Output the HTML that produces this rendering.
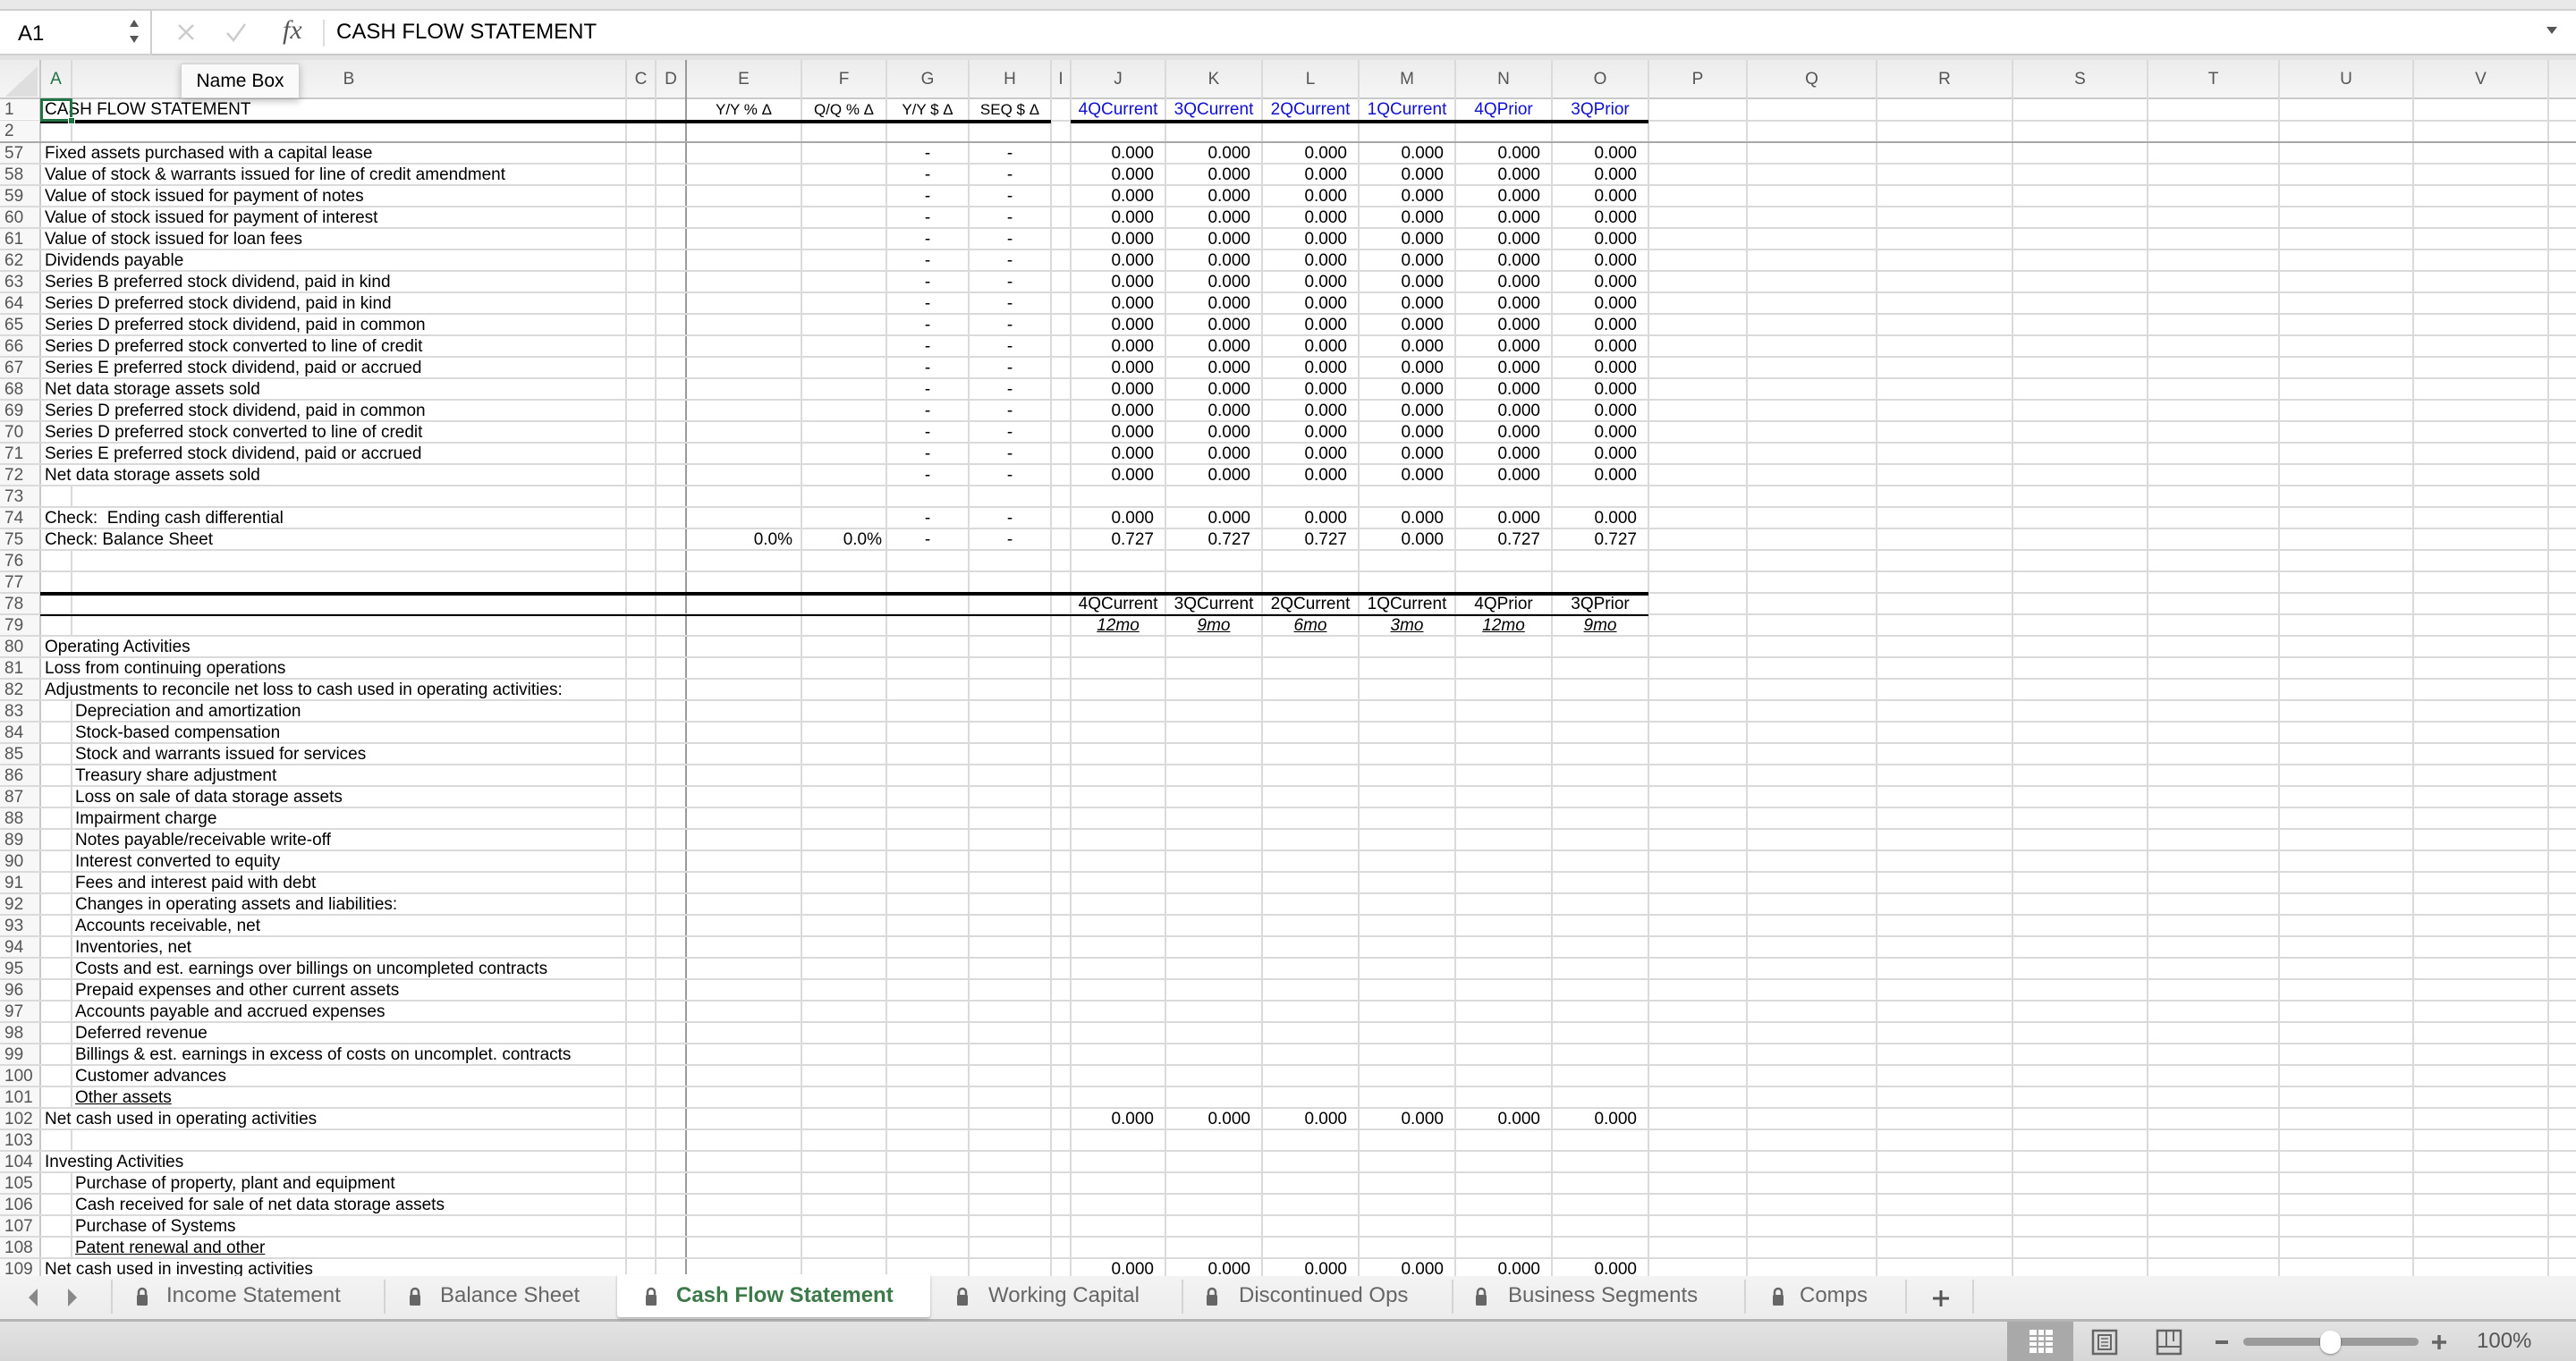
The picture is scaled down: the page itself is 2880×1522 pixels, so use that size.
<!DOCTYPE html>
<html><head><meta charset="utf-8">
<style>
*{margin:0;padding:0;box-sizing:border-box}
body{width:2880px;height:1522px;overflow:hidden;position:relative;background:#fff;font-family:"Liberation Sans",sans-serif;font-size:19px;color:#000}
.abs{position:absolute}
#top{left:0;top:0;width:2880px;height:10px;background:#e9e9e9}
#fbar{left:0;top:10px;width:2880px;height:52px;background:#fff;border-top:2px solid #d0d0d0;border-bottom:2px solid #c8c8c8}
#nbox{left:0;top:10px;width:170px;height:52px;border:2px solid #cfcfcf;border-left:none;background:#fff}
#hdr{left:0;top:62px;width:2880px;height:49px;background:linear-gradient(#ececec,#f5f5f5);border-top:5px solid #e2e2e2;border-bottom:2px solid #c9c9c9}
.ch{position:absolute;top:67px;height:44px;line-height:44px;text-align:center;color:#555;font-size:19px}
.vl{position:absolute;top:67px;width:2px;height:1360px;background:#dadada}
.rw{position:absolute;left:0;width:2880px;height:24px;line-height:23px}
.rw span{position:absolute;top:0;height:22px;white-space:nowrap}
.n{left:0;width:44px;padding-left:5px;color:#555;background:#f7f7f7}
.a{left:47px;padding-left:3px;background:#fff}
.b{left:81px;padding-left:3px;background:#fff}
.e{left:767px;width:129px;text-align:right;padding-right:10px}
.f{left:896px;width:95px;text-align:right;padding-right:5px}
.g{left:991px;width:92px;text-align:center}
.h{left:1083px;width:92px;text-align:center}
.j{left:1197px;width:106px;text-align:right;padding-right:13px}
.k{left:1303px;width:108px;text-align:right;padding-right:13px}
.l{left:1411px;width:108px;text-align:right;padding-right:13px}
.m{left:1519px;width:108px;text-align:right;padding-right:13px}
.o1{left:1627px;width:108px;text-align:right;padding-right:13px}
.o{left:1735px;width:108px;text-align:right;padding-right:13px}
.hc{text-align:center!important;padding-right:0!important}
.u{text-decoration:underline}
.blue{color:#1010d0}
#tabs{left:0;top:1427px;width:2880px;height:51px;background:linear-gradient(#f3f3f3,#ececec);border-bottom:3px solid #b5b5b5;z-index:5}
.tab{position:absolute;top:0;height:46px;line-height:44px;font-size:24px;color:#666;white-space:nowrap}
.sep{position:absolute;top:4px;width:2px;height:38px;background:#d4d4d4}
#status{left:0;top:1478px;width:2880px;height:44px;background:linear-gradient(#e3e3e3,#d6d6d6);z-index:5}
</style></head><body>
<div id="top" class="abs"></div>
<div id="fbar" class="abs"></div>
<div id="nbox" class="abs"></div>
<div class="abs" style="left:20px;top:20px;font-size:24px;line-height:36px">A1</div>
<svg class="abs" style="left:142px;top:18px" width="16" height="36"><path d="M3 12 L8 4 L13 12Z M3 22 L8 30 L13 22Z" fill="#555"/></svg>
<svg class="abs" style="left:196px;top:24px" width="160" height="24"><path d="M4 4 L20 20 M20 4 L4 20" stroke="#ccc" stroke-width="2.5"/><path d="M58 13 L65 21 L78 3" stroke="#ccc" stroke-width="2.5" fill="none"/></svg>
<div class="abs" style="left:316px;top:14px;font-family:'Liberation Serif',serif;font-style:italic;font-size:30px;color:#555;line-height:40px">fx</div>
<div class="abs" style="left:361px;top:22px;width:2px;height:30px;background:#ddd"></div>
<div class="abs" style="left:376px;top:18px;font-size:24px;line-height:36px">CASH FLOW STATEMENT</div>
<svg class="abs" style="left:2846px;top:28px" width="14" height="12"><path d="M1 2 L13 2 L7 10Z" fill="#555"/></svg>

<div id="hdr" class="abs"></div>
<svg class="abs" style="left:0;top:70px" width="45" height="40"><path d="M6 38 L42 38 L42 4Z" fill="#dedede"/></svg>
<div class="ch" style="left:45px;width:35px;color:#217346">A</div>
<div class="ch" style="left:80px;width:620px">B</div>
<div class="ch" style="left:700px;width:33px">C</div>
<div class="ch" style="left:733px;width:34px">D</div>
<div class="ch" style="left:767px;width:129px">E</div>
<div class="ch" style="left:896px;width:95px">F</div>
<div class="ch" style="left:991px;width:92px">G</div>
<div class="ch" style="left:1083px;width:92px">H</div>
<div class="ch" style="left:1175px;width:22px">I</div>
<div class="ch" style="left:1197px;width:106px">J</div>
<div class="ch" style="left:1303px;width:108px">K</div>
<div class="ch" style="left:1411px;width:108px">L</div>
<div class="ch" style="left:1519px;width:108px">M</div>
<div class="ch" style="left:1627px;width:108px">N</div>
<div class="ch" style="left:1735px;width:108px">O</div>
<div class="ch" style="left:1843px;width:110px">P</div>
<div class="ch" style="left:1953px;width:145px">Q</div>
<div class="ch" style="left:2098px;width:152px">R</div>
<div class="ch" style="left:2250px;width:151px">S</div>
<div class="ch" style="left:2401px;width:147px">T</div>
<div class="ch" style="left:2548px;width:150px">U</div>
<div class="ch" style="left:2698px;width:151px">V</div>

<!-- vertical grid -->
<div class="vl" style="left:44px;background:#c8c8c8"></div>
<div class="vl" style="left:79px"></div>
<div class="vl" style="left:699px"></div>
<div class="vl" style="left:732px"></div>
<div class="vl" style="left:766px;background:#9a9a9a"></div>
<div class="vl" style="left:895px"></div>
<div class="vl" style="left:990px"></div>
<div class="vl" style="left:1082px"></div>
<div class="vl" style="left:1174px"></div>
<div class="vl" style="left:1196px"></div>
<div class="vl" style="left:1302px"></div>
<div class="vl" style="left:1410px"></div>
<div class="vl" style="left:1518px"></div>
<div class="vl" style="left:1626px"></div>
<div class="vl" style="left:1734px"></div>
<div class="vl" style="left:1842px"></div>
<div class="vl" style="left:1952px"></div>
<div class="vl" style="left:2097px"></div>
<div class="vl" style="left:2249px"></div>
<div class="vl" style="left:2400px"></div>
<div class="vl" style="left:2547px"></div>
<div class="vl" style="left:2697px"></div>
<div class="vl" style="left:2848px"></div>

<!-- horizontal grid -->
<div class="abs" style="left:0;top:160px;width:2880px;height:1267px;background:repeating-linear-gradient(to bottom,rgba(255,255,255,0) 0,rgba(255,255,255,0) 22px,#dadada 22px,#dadada 24px)"></div>
<div class="abs" style="left:0;top:134px;width:2880px;height:2px;background:#dadada"></div>
<div class="abs" style="left:0;top:158px;width:2880px;height:2px;background:#a8a8a8"></div>

<!-- thick lines -->
<div class="abs" style="left:45px;top:134px;width:1130px;height:4px;background:#000"></div>
<div class="abs" style="left:1197px;top:134px;width:646px;height:4px;background:#000"></div>
<div class="abs" style="left:45px;top:662px;width:1798px;height:4px;background:#000"></div>
<div class="abs" style="left:45px;top:687px;width:1798px;height:2px;background:#000"></div>

<!-- rows -->
<div class="rw" style="top:111px"><span class="n">1</span><span class="a" style="background:none">CASH FLOW STATEMENT</span><span class="e hc" style="font-size:17px">Y/Y % Δ</span><span class="f hc" style="font-size:17px">Q/Q % Δ</span><span class="g" style="font-size:17px">Y/Y $ Δ</span><span class="h" style="font-size:17px">SEQ $ Δ</span><span class="j hc blue">4QCurrent</span><span class="k hc blue">3QCurrent</span><span class="l hc blue">2QCurrent</span><span class="m hc blue">1QCurrent</span><span class="o1 hc blue">4QPrior</span><span class="o hc blue">3QPrior</span></div>
<div class="rw" style="top:135px"><span class="n">2</span></div>
<div class="abs" style="left:45px;top:110px;width:36px;height:26px;border:3px solid #217346"></div>
<div class="abs" style="left:76px;top:131px;width:8px;height:8px;background:#217346;border:1px solid #fff"></div>

<div class="rw" style="top:160px"><span class="n">57</span><span class="a">Fixed assets purchased with a capital lease</span><span class="g">-</span><span class="h">-</span><span class="j">0.000</span><span class="k">0.000</span><span class="l">0.000</span><span class="m">0.000</span><span class="o1">0.000</span><span class="o">0.000</span></div>
<div class="rw" style="top:184px"><span class="n">58</span><span class="a">Value of stock &amp; warrants issued for line of credit amendment</span><span class="g">-</span><span class="h">-</span><span class="j">0.000</span><span class="k">0.000</span><span class="l">0.000</span><span class="m">0.000</span><span class="o1">0.000</span><span class="o">0.000</span></div>
<div class="rw" style="top:208px"><span class="n">59</span><span class="a">Value of stock issued for payment of notes</span><span class="g">-</span><span class="h">-</span><span class="j">0.000</span><span class="k">0.000</span><span class="l">0.000</span><span class="m">0.000</span><span class="o1">0.000</span><span class="o">0.000</span></div>
<div class="rw" style="top:232px"><span class="n">60</span><span class="a">Value of stock issued for payment of interest</span><span class="g">-</span><span class="h">-</span><span class="j">0.000</span><span class="k">0.000</span><span class="l">0.000</span><span class="m">0.000</span><span class="o1">0.000</span><span class="o">0.000</span></div>
<div class="rw" style="top:256px"><span class="n">61</span><span class="a">Value of stock issued for loan fees</span><span class="g">-</span><span class="h">-</span><span class="j">0.000</span><span class="k">0.000</span><span class="l">0.000</span><span class="m">0.000</span><span class="o1">0.000</span><span class="o">0.000</span></div>
<div class="rw" style="top:280px"><span class="n">62</span><span class="a">Dividends payable</span><span class="g">-</span><span class="h">-</span><span class="j">0.000</span><span class="k">0.000</span><span class="l">0.000</span><span class="m">0.000</span><span class="o1">0.000</span><span class="o">0.000</span></div>
<div class="rw" style="top:304px"><span class="n">63</span><span class="a">Series B preferred stock dividend, paid in kind</span><span class="g">-</span><span class="h">-</span><span class="j">0.000</span><span class="k">0.000</span><span class="l">0.000</span><span class="m">0.000</span><span class="o1">0.000</span><span class="o">0.000</span></div>
<div class="rw" style="top:328px"><span class="n">64</span><span class="a">Series D preferred stock dividend, paid in kind</span><span class="g">-</span><span class="h">-</span><span class="j">0.000</span><span class="k">0.000</span><span class="l">0.000</span><span class="m">0.000</span><span class="o1">0.000</span><span class="o">0.000</span></div>
<div class="rw" style="top:352px"><span class="n">65</span><span class="a">Series D preferred stock dividend, paid in common</span><span class="g">-</span><span class="h">-</span><span class="j">0.000</span><span class="k">0.000</span><span class="l">0.000</span><span class="m">0.000</span><span class="o1">0.000</span><span class="o">0.000</span></div>
<div class="rw" style="top:376px"><span class="n">66</span><span class="a">Series D preferred stock converted to line of credit</span><span class="g">-</span><span class="h">-</span><span class="j">0.000</span><span class="k">0.000</span><span class="l">0.000</span><span class="m">0.000</span><span class="o1">0.000</span><span class="o">0.000</span></div>
<div class="rw" style="top:400px"><span class="n">67</span><span class="a">Series E preferred stock dividend, paid or accrued</span><span class="g">-</span><span class="h">-</span><span class="j">0.000</span><span class="k">0.000</span><span class="l">0.000</span><span class="m">0.000</span><span class="o1">0.000</span><span class="o">0.000</span></div>
<div class="rw" style="top:424px"><span class="n">68</span><span class="a">Net data storage assets sold</span><span class="g">-</span><span class="h">-</span><span class="j">0.000</span><span class="k">0.000</span><span class="l">0.000</span><span class="m">0.000</span><span class="o1">0.000</span><span class="o">0.000</span></div>
<div class="rw" style="top:448px"><span class="n">69</span><span class="a">Series D preferred stock dividend, paid in common</span><span class="g">-</span><span class="h">-</span><span class="j">0.000</span><span class="k">0.000</span><span class="l">0.000</span><span class="m">0.000</span><span class="o1">0.000</span><span class="o">0.000</span></div>
<div class="rw" style="top:472px"><span class="n">70</span><span class="a">Series D preferred stock converted to line of credit</span><span class="g">-</span><span class="h">-</span><span class="j">0.000</span><span class="k">0.000</span><span class="l">0.000</span><span class="m">0.000</span><span class="o1">0.000</span><span class="o">0.000</span></div>
<div class="rw" style="top:496px"><span class="n">71</span><span class="a">Series E preferred stock dividend, paid or accrued</span><span class="g">-</span><span class="h">-</span><span class="j">0.000</span><span class="k">0.000</span><span class="l">0.000</span><span class="m">0.000</span><span class="o1">0.000</span><span class="o">0.000</span></div>
<div class="rw" style="top:520px"><span class="n">72</span><span class="a">Net data storage assets sold</span><span class="g">-</span><span class="h">-</span><span class="j">0.000</span><span class="k">0.000</span><span class="l">0.000</span><span class="m">0.000</span><span class="o1">0.000</span><span class="o">0.000</span></div>
<div class="rw" style="top:544px"><span class="n">73</span></div>
<div class="rw" style="top:568px"><span class="n">74</span><span class="a">Check:&nbsp; Ending cash differential</span><span class="g">-</span><span class="h">-</span><span class="j">0.000</span><span class="k">0.000</span><span class="l">0.000</span><span class="m">0.000</span><span class="o1">0.000</span><span class="o">0.000</span></div>
<div class="rw" style="top:592px"><span class="n">75</span><span class="a">Check: Balance Sheet</span><span class="e">0.0%</span><span class="f">0.0%</span><span class="g">-</span><span class="h">-</span><span class="j">0.727</span><span class="k">0.727</span><span class="l">0.727</span><span class="m">0.000</span><span class="o1">0.727</span><span class="o">0.727</span></div>
<div class="rw" style="top:616px"><span class="n">76</span></div>
<div class="rw" style="top:640px"><span class="n">77</span></div>
<div class="rw" style="top:664px"><span class="n">78</span><span class="j hc">4QCurrent</span><span class="k hc">3QCurrent</span><span class="l hc">2QCurrent</span><span class="m hc">1QCurrent</span><span class="o1 hc">4QPrior</span><span class="o hc">3QPrior</span></div>
<div class="rw" style="top:688px;font-style:italic"><span class="n" style="font-style:normal">79</span><span class="j hc u">12mo</span><span class="k hc u">9mo</span><span class="l hc u">6mo</span><span class="m hc u">3mo</span><span class="o1 hc u">12mo</span><span class="o hc u">9mo</span></div>
<div class="rw" style="top:712px"><span class="n">80</span><span class="a">Operating Activities</span></div>
<div class="rw" style="top:736px"><span class="n">81</span><span class="a">Loss from continuing operations</span></div>
<div class="rw" style="top:760px"><span class="n">82</span><span class="a">Adjustments to reconcile net loss to cash used in operating activities:</span></div>
<div class="rw" style="top:784px"><span class="n">83</span><span class="b">Depreciation and amortization</span></div>
<div class="rw" style="top:808px"><span class="n">84</span><span class="b">Stock-based compensation</span></div>
<div class="rw" style="top:832px"><span class="n">85</span><span class="b">Stock and warrants issued for services</span></div>
<div class="rw" style="top:856px"><span class="n">86</span><span class="b">Treasury share adjustment</span></div>
<div class="rw" style="top:880px"><span class="n">87</span><span class="b">Loss on sale of data storage assets</span></div>
<div class="rw" style="top:904px"><span class="n">88</span><span class="b">Impairment charge</span></div>
<div class="rw" style="top:928px"><span class="n">89</span><span class="b">Notes payable/receivable write-off</span></div>
<div class="rw" style="top:952px"><span class="n">90</span><span class="b">Interest converted to equity</span></div>
<div class="rw" style="top:976px"><span class="n">91</span><span class="b">Fees and interest paid with debt</span></div>
<div class="rw" style="top:1000px"><span class="n">92</span><span class="b">Changes in operating assets and liabilities:</span></div>
<div class="rw" style="top:1024px"><span class="n">93</span><span class="b">Accounts receivable, net</span></div>
<div class="rw" style="top:1048px"><span class="n">94</span><span class="b">Inventories, net</span></div>
<div class="rw" style="top:1072px"><span class="n">95</span><span class="b">Costs and est. earnings over billings on uncompleted contracts</span></div>
<div class="rw" style="top:1096px"><span class="n">96</span><span class="b">Prepaid expenses and other current assets</span></div>
<div class="rw" style="top:1120px"><span class="n">97</span><span class="b">Accounts payable and accrued expenses</span></div>
<div class="rw" style="top:1144px"><span class="n">98</span><span class="b">Deferred revenue</span></div>
<div class="rw" style="top:1168px"><span class="n">99</span><span class="b">Billings &amp; est. earnings in excess of costs on uncomplet. contracts</span></div>
<div class="rw" style="top:1192px"><span class="n">100</span><span class="b">Customer advances</span></div>
<div class="rw" style="top:1216px"><span class="n">101</span><span class="b u">Other assets</span></div>
<div class="rw" style="top:1240px"><span class="n">102</span><span class="a">Net cash used in operating activities</span><span class="j">0.000</span><span class="k">0.000</span><span class="l">0.000</span><span class="m">0.000</span><span class="o1">0.000</span><span class="o">0.000</span></div>
<div class="rw" style="top:1264px"><span class="n">103</span></div>
<div class="rw" style="top:1288px"><span class="n">104</span><span class="a">Investing Activities</span></div>
<div class="rw" style="top:1312px"><span class="n">105</span><span class="b">Purchase of property, plant and equipment</span></div>
<div class="rw" style="top:1336px"><span class="n">106</span><span class="b">Cash received for sale of net data storage assets</span></div>
<div class="rw" style="top:1360px"><span class="n">107</span><span class="b">Purchase of Systems</span></div>
<div class="rw" style="top:1384px"><span class="n">108</span><span class="b u">Patent renewal and other</span></div>
<div class="rw" style="top:1408px"><span class="n">109</span><span class="a">Net cash used in investing activities</span><span class="j">0.000</span><span class="k">0.000</span><span class="l">0.000</span><span class="m">0.000</span><span class="o1">0.000</span><span class="o">0.000</span></div>

<!-- Name box tooltip -->
<div class="abs" style="left:202px;top:71px;width:133px;height:39px;background:#fafafa;border:1px solid #d0d0d0;box-shadow:0 3px 8px rgba(0,0,0,.25);font-size:21px;line-height:37px;text-align:center">Name Box</div>

<!-- tabs -->
<div id="tabs" class="abs">
<svg class="abs" style="left:28px;top:12px" width="60" height="24"><path d="M14 2 L4 12 L14 22Z" fill="#888"/><path d="M48 2 L58 12 L48 22Z" fill="#888"/></svg>
<div class="sep" style="left:124px"></div>
<div class="abs" style="left:690px;top:-2px;width:350px;height:48px;background:#fff;box-shadow:0 2px 3px rgba(0,0,0,.25);border-radius:0 0 3px 3px"></div>
<svg class="abs" style="left:152px;top:12px" width="14" height="22"><path d="M3 10 V6 a4 4 0 0 1 8 0 V10" stroke="#666" stroke-width="2.5" fill="none"/><rect x="1" y="9" width="12" height="12" rx="1.5" fill="#666"/></svg>
<div class="tab" style="left:186px">Income Statement</div>
<div class="sep" style="left:429px"></div>
<svg class="abs" style="left:457px;top:12px" width="14" height="22"><path d="M3 10 V6 a4 4 0 0 1 8 0 V10" stroke="#666" stroke-width="2.5" fill="none"/><rect x="1" y="9" width="12" height="12" rx="1.5" fill="#666"/></svg>
<div class="tab" style="left:492px">Balance Sheet</div>
<svg class="abs" style="left:721px;top:12px" width="14" height="22"><path d="M3 10 V6 a4 4 0 0 1 8 0 V10" stroke="#666" stroke-width="2.5" fill="none"/><rect x="1" y="9" width="12" height="12" rx="1.5" fill="#666"/></svg>
<div class="tab" style="left:756px;color:#3c7a4a;font-weight:bold">Cash Flow Statement</div>
<svg class="abs" style="left:1069px;top:12px" width="14" height="22"><path d="M3 10 V6 a4 4 0 0 1 8 0 V10" stroke="#666" stroke-width="2.5" fill="none"/><rect x="1" y="9" width="12" height="12" rx="1.5" fill="#666"/></svg>
<div class="tab" style="left:1105px">Working Capital</div>
<div class="sep" style="left:1321px"></div>
<svg class="abs" style="left:1348px;top:12px" width="14" height="22"><path d="M3 10 V6 a4 4 0 0 1 8 0 V10" stroke="#666" stroke-width="2.5" fill="none"/><rect x="1" y="9" width="12" height="12" rx="1.5" fill="#666"/></svg>
<div class="tab" style="left:1385px">Discontinued Ops</div>
<div class="sep" style="left:1623px"></div>
<svg class="abs" style="left:1649px;top:12px" width="14" height="22"><path d="M3 10 V6 a4 4 0 0 1 8 0 V10" stroke="#666" stroke-width="2.5" fill="none"/><rect x="1" y="9" width="12" height="12" rx="1.5" fill="#666"/></svg>
<div class="tab" style="left:1686px">Business Segments</div>
<div class="sep" style="left:1950px"></div>
<svg class="abs" style="left:1981px;top:12px" width="14" height="22"><path d="M3 10 V6 a4 4 0 0 1 8 0 V10" stroke="#666" stroke-width="2.5" fill="none"/><rect x="1" y="9" width="12" height="12" rx="1.5" fill="#666"/></svg>
<div class="tab" style="left:2012px">Comps</div>
<div class="sep" style="left:2130px"></div>
<svg class="abs" style="left:2159px;top:14px" width="22" height="22"><path d="M11 2 V20 M2 11 H20" stroke="#555" stroke-width="3"/></svg>
<div class="sep" style="left:2205px"></div>
</div>

<!-- status -->
<div id="status" class="abs">
<div class="abs" style="left:2244px;top:0;width:74px;height:44px;background:#a9a9a9"></div>
<svg class="abs" style="left:2268px;top:8px" width="28" height="28"><rect x="1" y="1" width="26" height="26" fill="#fff"/><path d="M10 1 V27 M18 1 V27 M1 8 H27 M1 14 H27 M1 20 H27" stroke="#a9a9a9" stroke-width="2"/></svg>
<svg class="abs" style="left:2338px;top:8px" width="30" height="30"><rect x="2" y="2" width="26" height="26" fill="none" stroke="#666" stroke-width="2.5"/><rect x="8" y="7" width="14" height="16" fill="none" stroke="#666" stroke-width="2"/><path d="M11 11 H19 M11 15 H19 M11 19 H19" stroke="#666" stroke-width="1.5"/></svg>
<svg class="abs" style="left:2410px;top:8px" width="30" height="30"><rect x="2" y="2" width="26" height="26" fill="none" stroke="#666" stroke-width="2.5"/><path d="M2 20 H28 M12 2 V20 M20 2 V14" stroke="#666" stroke-width="2"/></svg>
<div class="abs" style="left:2477px;top:21px;width:14px;height:4px;background:#666"></div>
<div class="abs" style="left:2508px;top:18px;width:196px;height:9px;border-radius:5px;background:#9a9a9a"></div>
<div class="abs" style="left:2594px;top:10px;width:23px;height:26px;border-radius:11px;background:#fff;box-shadow:0 1px 2px rgba(0,0,0,.4)"></div>
<svg class="abs" style="left:2718px;top:14px" width="18" height="18"><path d="M9 1 V17 M1 9 H17" stroke="#666" stroke-width="3.5"/></svg>
<div class="abs" style="left:2769px;top:6px;font-size:24px;line-height:32px;color:#555">100%</div>
</div>
</body></html>
